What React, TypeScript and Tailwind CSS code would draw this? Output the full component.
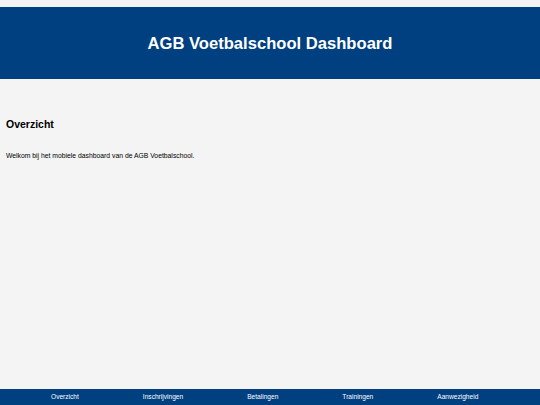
export default function App() {
  const tabs = ["Overzicht", "Inschrijvingen", "Betalingen", "Trainingen", "Aanwezigheid"];

  return (
    <div
      className="flex h-[405px] w-[540px] flex-col overflow-hidden bg-[#f4f4f4] pt-[7px]"
      style={{ fontFamily: '"Liberation Sans", Arial, sans-serif' }}
    >
      <header className="flex h-[72px] items-center justify-center bg-[#004080] pt-[2px]">
        <h1 className="text-[16.6px] font-bold text-white">AGB Voetbalschool Dashboard</h1>
      </header>

      <main className="flex-1 px-[6px] pt-[38px]">
        <h2 className="text-[10.5px] leading-[14px] font-bold text-black">Overzicht</h2>
        <p className="mt-[20px] text-[6.8px] leading-[9px] text-black">
          Welkom bij het mobiele dashboard van de AGB Voetbalschool.
        </p>
      </main>

      <nav className="flex h-[16px] items-center gap-[64px] bg-[#004080] pl-[51px]">
        {tabs.map((t) => (
          <span key={t} className="text-[6.6px] leading-none text-white">
            {t}
          </span>
        ))}
      </nav>
    </div>
  );
}
